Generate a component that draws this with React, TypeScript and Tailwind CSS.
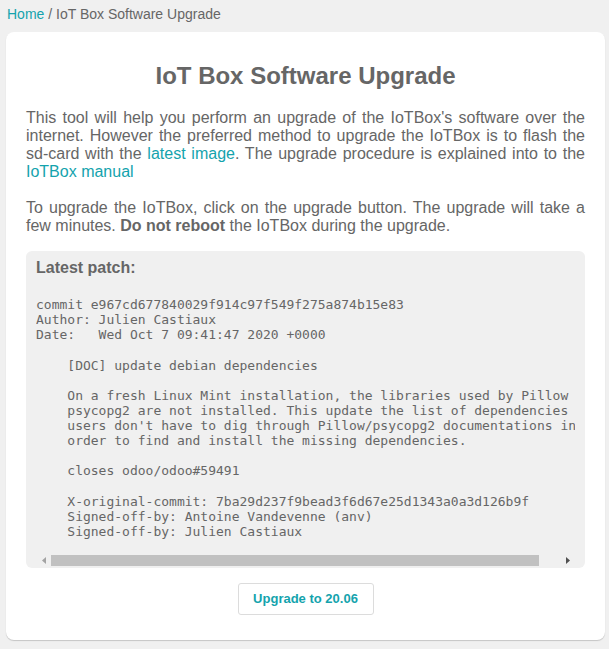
import React from 'react'

const patch = `commit e967cd677840029f914c97f549f275a874b15e83
Author: Julien Castiaux
Date:   Wed Oct 7 09:41:47 2020 +0000

    [DOC] update debian dependencies

    On a fresh Linux Mint installation, the libraries used by Pillow and
    psycopg2 are not installed. This update the list of dependencies so
    users don't have to dig through Pillow/psycopg2 documentations in
    order to find and install the missing dependencies.

    closes odoo/odoo#59491

    X-original-commit: 7ba29d237f9bead3f6d67e25d1343a0a3d126b9f
    Signed-off-by: Antoine Vandevenne (anv)
    Signed-off-by: Julien Castiaux`

// Barre de défilement horizontale (dessinée, le navigateur headless la masque)
const ScrollBar: React.FC = () => (
  <div className="flex h-[15px] items-stretch">
    <div className="w-[15px] flex items-center justify-center">
      <svg width="4" height="7" viewBox="0 0 4 7">
        <path d="M4 0L0 3.5L4 7z" fill="#a3a3a3" />
      </svg>
    </div>
    <div className="w-[488px] my-[2px] bg-[#c1c1c1]" />
    <div className="flex-1" />
    <div className="w-[15px] flex items-center justify-center">
      <svg width="4" height="7" viewBox="0 0 4 7">
        <path d="M0 0L4 3.5L0 7z" fill="#505050" />
      </svg>
    </div>
  </div>
)

const App: React.FC = () => {
  return (
    <div className="min-h-screen bg-[#f0f0f0] font-['Liberation_Sans',Arial,sans-serif] text-[#666]">
      {/* Breadcrumb */}
      <div className="px-[7px] pt-[5px] h-[32px] text-[14px] leading-[18px]">
        <a href="#" className="text-[#14a3ad]">
          Home
        </a>{' '}
        / IoT Box Software Upgrade
      </div>

      <div className="ml-[6px] mr-[4px] bg-white rounded-[8px] shadow-[0_1px_1px_rgba(0,0,0,0.18)] px-5 pt-[30px] pb-[25px]">
        <h2 className="text-center text-[24px] leading-[28px] font-bold text-[#666]">
          IoT Box Software Upgrade
        </h2>

        <p className="mt-[19px] text-[16px] leading-[18px] text-justify">
          This tool will help you perform an upgrade of the IoTBox's software
          over the internet. However the preferred method to upgrade the IoTBox
          is to flash the sd-card with the{' '}
          <a href="#" className="text-[#14a3ad]">
            latest image
          </a>
          . The upgrade procedure is explained into to the{' '}
          <a href="#" className="text-[#14a3ad]">
            IoTBox manual
          </a>
        </p>

        <p className="mt-[18px] text-[16px] leading-[18px] text-justify">
          To upgrade the IoTBox, click on the upgrade button. The upgrade will
          take a few minutes. <b>Do not reboot</b> the IoTBox during the
          upgrade.
        </p>

        <div className="mt-[16px] bg-[#f0f0f0] rounded-[6px] px-[10px] pt-[8px]">
          <div className="text-[16px] leading-[18px] font-bold">
            Latest patch:
          </div>
          <pre className="mt-[20px] overflow-hidden font-['DejaVu_Sans_Mono',monospace] text-[13px] leading-[15.13px] text-[#666] pb-[14px]">
            {patch}
          </pre>
          <ScrollBar />
        </div>

        <div className="flex justify-center mt-[15px]">
          <button className="h-[32px] w-[136px] bg-white border border-[#dcdcdc] rounded-[3px] text-[13px] font-bold text-[#14a3ad]">
            Upgrade to 20.06
          </button>
        </div>
      </div>
    </div>
  )
}

export default App
